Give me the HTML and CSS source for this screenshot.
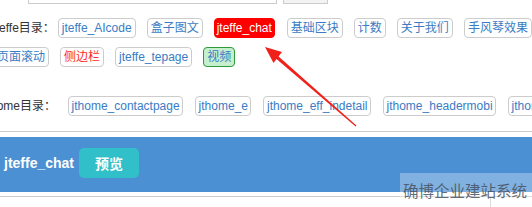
FILE: index.html
```html
<!DOCTYPE html>
<html lang="zh">
<head>
<meta charset="utf-8">
<link rel="stylesheet" href="styles.css">
</head>
<body>
<div class="page">
  <div class="topbar">
    <div class="input"></div>
    <div class="btn-gray"></div>
  </div>

  <div class="section s1">
    <div class="row">
      <span class="label">jteffe目录：</span>
      <span class="tag">jteffe_AIcode</span>
      <span class="tag">盒子图文</span>
      <span class="tag tag-red">jteffe_chat</span>
      <span class="tag">基础区块</span>
      <span class="tag">计数</span>
      <span class="tag">关于我们</span>
      <span class="tag">手风琴效果</span>
    </div>
    <div class="row">
      <span class="tag">页面滚动</span>
      <span class="tag tag-redtext">侧边栏</span>
      <span class="tag">jteffe_tepage</span>
      <span class="tag tag-green">视频</span>
    </div>
  </div>

  <div class="section s2">
    <div class="row">
      <span class="label">jthome目录：</span>
      <span class="tag">jthome_contactpage</span>
      <span class="tag">jthome_e</span>
      <span class="tag">jthome_eff_indetail</span>
      <span class="tag">jthome_headermobi</span>
      <span class="tag">jthome_footer</span>
    </div>
  </div>

  <div class="preview-box">
    <div class="preview-bar">
      <span class="preview-title">jteffe_chat</span>
      <span class="preview-btn">预览</span>
    </div>
  </div>
  <div class="below">
    <div></div>
    <div class="below-cell"></div>
  </div>
</div>

<svg class="arrow" width="532" height="207" viewBox="0 0 532 207">
  <polygon points="273,56 275.2,53.6 356.4,125.6 355.6,126.4" fill="#f0201a"/>
  <polygon points="265,47 273.5,63 282,52" fill="#f0201a"/>
</svg>

<div class="watermark">确博企业建站系统</div>
</body>
</html>
```

FILE: styles.css
```css
html, body {
  margin: 0;
  padding: 0;
  background: #fff;
}
body {
  width: 532px;
  height: 207px;
  overflow: hidden;
  position: relative;
  font-family: "Liberation Sans", Arial, "Noto Sans CJK SC", sans-serif;
  font-size: 12px;
  color: #333;
}
.page {
  display: flex;
  flex-direction: column;
}
.topbar {
  display: flex;
  height: 4px;
  overflow: hidden;
  align-items: flex-end;
}
.input {
  margin-left: 28px;
  width: 247px;
  height: 30px;
  flex: none;
  border: 1px solid #ccc;
  background: #fff;
}
.btn-gray {
  margin-left: 6px;
  width: 43px;
  height: 30px;
  flex: none;
  border: 1px solid #ccc;
  background: #f3f3f3;
}
.section {
  display: flex;
  flex-direction: column;
}
.row {
  display: flex;
  align-items: center;
  flex-wrap: nowrap;
}
.s1 {
  margin-top: 14px;
  margin-left: -7px;
  row-gap: 9px;
}
.s2 {
  margin-top: 29px;
  margin-left: -16px;
}
.label {
  flex: none;
  white-space: nowrap;
  color: #333;
  line-height: 20px;
}
.s1 .label { margin-right: 3px; }
.s2 .label { margin-right: 12px; }
.tag {
  flex: none;
  white-space: nowrap;
  display: inline-block;
  line-height: 18px;
  padding: 0 3px;
  border: 1px solid #ccc;
  border-radius: 4px;
  color: #3a7cc5;
  background: #fff;
  margin-right: 11px;
}
.s2 .tag {
  margin-right: 12px;
  padding: 0 2.5px;
}
.tag-red {
  background: #ff0000;
  border-color: #ff0000;
  color: #fff;
  padding: 0 2px;
  margin-right: 12px;
}
.tag-redtext {
  color: #ff2a2a;
}
.tag-green {
  background: #c6efce;
  border-color: #2e9a3a;
  color: #3a7cc5;
}
.preview-box {
  margin-top: 15px;
  border-top: 1px solid #ccc;
  border-bottom: 1px solid #ccc;
  padding: 5px 0 4px;
}
.preview-bar {
  height: 55px;
  background: #4a90d3;
  display: flex;
  align-items: center;
  padding: 0 0 3px 4px;
  box-sizing: border-box;
  gap: 5px;
}
.preview-title {
  color: #fff;
  font-weight: bold;
  font-size: 14px;
}
.preview-btn {
  width: 60px;
  height: 30px;
  border-radius: 5px;
  background: #31bfc9;
  color: #fff;
  font-weight: bold;
  font-size: 14px;
  display: flex;
  align-items: center;
  justify-content: center;
  font-family: "Noto Sans CJK SC", sans-serif;
}
.below {
  display: grid;
  grid-template-columns: 490px 1fr;
  height: 12px;
}
.below-cell {
  border-left: 1px solid #ccc;
}
.arrow {
  position: absolute;
  left: 0;
  top: 0;
  pointer-events: none;
}
.watermark {
  position: absolute;
  right: 0;
  bottom: 0;
  width: 132px;
  height: 34px;
  padding: 8px 0 0 3px;
  box-sizing: border-box;
  background: rgba(255, 255, 255, 0.3);
  color: rgba(70, 80, 95, 0.85);
  font-family: "Noto Sans CJK SC", sans-serif;
  font-size: 15.5px;
  line-height: 18px;
  white-space: nowrap;
  overflow: hidden;
}
```
